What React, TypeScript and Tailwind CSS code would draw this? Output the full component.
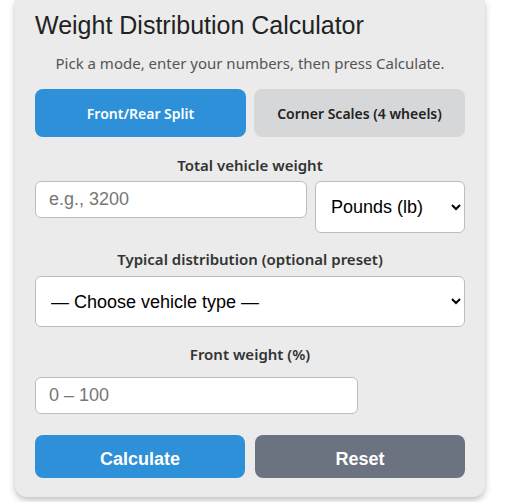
import React, { useState } from 'react'

const ui = '"Noto Sans", "Open Sans", sans-serif'
const arial = '"Liberation Sans", Arial, sans-serif'

const App = () => {
  const [mode, setMode] = useState<'split' | 'corner'>('split')

  return (
    <div className="w-[512px] h-[502px] bg-white px-[15px]" style={{ fontFamily: ui }}>
      <div className="w-[470px] bg-[#eaebea] rounded-b-xl shadow-[0_3px_6px_rgba(0,0,0,0.25)] px-5 pb-[19px]">
        <h1
          className="pt-[11px] text-[25px] leading-[28px] text-[#222]"
          style={{ fontFamily: arial }}
        >
          Weight Distribution Calculator
        </h1>
        <p className="mt-[14px] text-center text-[15px] leading-5 text-[#555]">
          Pick a mode, enter your numbers, then press Calculate.
        </p>

        {/* mode tabs */}
        <div className="mt-4 grid grid-cols-2 gap-2">
          <button
            onClick={() => setMode('split')}
            className={`h-12 rounded-lg text-[14px] font-semibold ${
              mode === 'split' ? 'bg-[#2d90d8] text-white' : 'bg-[#d6d7d9] text-[#222]'
            }`}
          >
            Front/Rear Split
          </button>
          <button
            onClick={() => setMode('corner')}
            className={`h-12 rounded-lg text-[14px] font-semibold ${
              mode === 'corner' ? 'bg-[#2d90d8] text-white' : 'bg-[#d6d7d9] text-[#222]'
            }`}
          >
            Corner Scales (4 wheels)
          </button>
        </div>

        <div className="mt-[18px] text-center text-[15px] leading-5 font-semibold text-[#333]">
          Total vehicle weight
        </div>
        <div className="mt-[6px] flex items-start gap-2">
          <input
            placeholder="e.g., 3200"
            className="flex-1 min-w-0 h-[37px] rounded-md border border-[#bdbdbd] bg-white px-[13px] text-[18px] text-black placeholder:text-[#777]"
            style={{ fontFamily: arial }}
          />
          <select
            className="w-[150px] h-[52px] rounded-md border border-[#bdbdbd] bg-white pl-[11px] pr-2 text-[18px] text-black"
            style={{ fontFamily: arial }}
          >
            <option>Pounds (lb)</option>
            <option>Kilograms (kg)</option>
          </select>
        </div>

        <div className="mt-4 text-center text-[15px] leading-5 font-semibold text-[#333]">
          Typical distribution (optional preset)
        </div>
        <select
          className="mt-[7px] w-full h-[51px] rounded-md border border-[#bdbdbd] bg-white pl-[11px] pr-2 text-[18px] text-black"
          style={{ fontFamily: arial }}
        >
          <option>— Choose vehicle type —</option>
          <option>Front-engine, front-wheel drive</option>
          <option>Front-engine, rear-wheel drive</option>
          <option>Mid-engine</option>
          <option>Rear-engine</option>
        </select>

        <div className="mt-[17px] text-center text-[15px] leading-5 font-semibold text-[#333]">
          Front weight (%)
        </div>
        <input
          placeholder="0 – 100"
          className="mt-[13px] block w-3/4 h-[37px] rounded-md border border-[#bdbdbd] bg-white px-[13px] text-[18px] text-black placeholder:text-[#777]"
          style={{ fontFamily: arial }}
        />

        <div className="mt-[21px] grid grid-cols-2 gap-[10px]">
          <button
            className="h-[43px] rounded-lg bg-[#2d90d8] pt-[6px] text-white text-[18px] font-bold"
            style={{ fontFamily: arial }}
          >
            Calculate
          </button>
          <button
            className="h-[43px] rounded-lg bg-[#6b7280] pt-[6px] text-white text-[18px] font-bold"
            style={{ fontFamily: arial }}
          >
            Reset
          </button>
        </div>
      </div>
    </div>
  )
}

export default App
